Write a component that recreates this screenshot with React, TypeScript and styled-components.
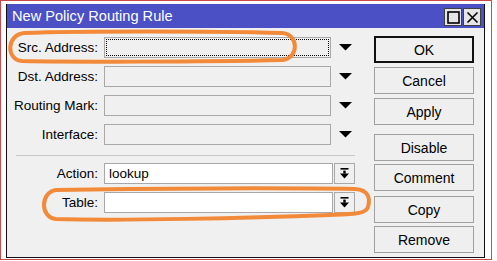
import React from 'react';
import styled, { createGlobalStyle } from 'styled-components';

const Global = createGlobalStyle`
  html, body { margin: 0; padding: 0; background: #ffffff; }
  body { font-family: "Liberation Sans", Arial, sans-serif; }
`;

const Frame = styled.div`
  position: relative;
  box-sizing: border-box;
  width: 492px;
  height: 260px;
  border: 1px solid #c84a4a;
  padding: 3px 6px 1px 5px;
  display: flex;
`;

const Window = styled.div`
  box-sizing: border-box;
  width: 479px;
  display: flex;
  flex-direction: column;
  border: 1px solid #101010;
  border-top: none;
  background: #f0f0f0;
`;

const TitleBar = styled.div`
  height: 24px;
  background: #4b50c5;
  display: flex;
  align-items: center;
  padding: 0 3px 0 5px;
`;

const Title = styled.span`
  color: #ffffff;
  font-size: 14.6px;
  line-height: 24px;
`;

const TitleButtons = styled.div`
  margin-left: auto;
  display: flex;
  gap: 1px;
  padding-top: 2px;
`;

const TitleButton = styled.div`
  box-sizing: border-box;
  width: 18px;
  height: 18px;
  background: #e6e6e6;
  border: 1px solid #404040;
  display: flex;
  align-items: center;
  justify-content: center;
`;

const Body = styled.div`
  flex: 1;
  display: flex;
  padding: 8px 10px 0 0;
`;

const Form = styled.div`
  width: 349px;
  display: flex;
  flex-direction: column;
  padding-top: 1px;
`;

const Row = styled.div<{ $mt?: number }>`
  display: grid;
  grid-template-columns: 97px 227px 25px;
  align-items: center;
  height: 21px;
  margin-top: ${(p) => p.$mt ?? 8}px;
`;

const Label = styled.label`
  text-align: right;
  padding-right: 6px;
  font-size: 13.5px;
  color: #000;
  white-space: nowrap;
`;

const Field = styled.div<{ $active?: boolean; $wide?: boolean }>`
  box-sizing: border-box;
  height: 21px;
  width: ${(p) => (p.$wide ? 229 : 227)}px;
  border: 1px solid #a8a8a8;
  background: ${(p) => (p.$active ? '#ffffff' : '#f0f0f0')};
  font-size: 13.5px;
  line-height: 19px;
  padding: 0 0 0 4px;
  color: #000;
  position: relative;
`;

const FocusRect = styled.div`
  position: absolute;
  inset: 1px;
  border: 1px dotted #000;
`;

const ArrowCell = styled.div<{ $button?: boolean }>`
  display: flex;
  align-items: center;
  justify-content: ${(p) => (p.$button ? 'flex-start' : 'center')};
  padding-left: ${(p) => (p.$button ? 0 : 4)}px;
  height: 21px;
`;

const DropButton = styled.div`
  box-sizing: border-box;
  width: 21px;
  height: 21px;
  margin-left: 3px;
  border: 1px solid #a8a8a8;
  background: #f0f0f0;
  display: flex;
  align-items: center;
  justify-content: center;
`;

const Separator = styled.div`
  margin: 10px 0 0 9px;
  width: 339px;
  height: 1px;
  background: #c8c8c8;
`;

const Buttons = styled.div`
  margin-left: 18px;
  width: 100px;
  display: flex;
  flex-direction: column;
`;

const Button = styled.button<{ $default?: boolean; $mt?: number }>`
  box-sizing: border-box;
  width: 100px;
  height: 27px;
  margin-top: ${(p) => p.$mt ?? 4}px;
  background: #efefef;
  border: ${(p) => (p.$default ? '2px solid #111' : '1px solid #a0a0a0')};
  font-family: "Liberation Sans", Arial, sans-serif;
  font-size: 14px;
  color: #000;
  padding: 0;
`;

const Overlay = styled.svg`
  position: absolute;
  left: -1px;
  top: -1px;
  pointer-events: none;
`;

const Triangle = () => (
  <svg width="13" height="7" viewBox="0 0 13 7">
    <polygon points="0,0 13,0 6.5,6.5" fill="#000" />
  </svg>
);

const BarArrow = () => (
  <svg width="9" height="11" viewBox="0 0 9 11">
    <rect x="0.5" y="0" width="8" height="1.6" fill="#000" />
    <rect x="3.3" y="2.6" width="2.4" height="3" fill="#000" />
    <polygon points="0,5.4 9,5.4 4.5,10.5" fill="#000" />
  </svg>
);

const topFields = ['Src. Address:', 'Dst. Address:', 'Routing Mark:', 'Interface:'];

export default function App() {
  return (
    <>
      <Global />
      <Frame>
        <Window>
          <TitleBar>
            <Title>New Policy Routing Rule</Title>
            <TitleButtons>
              <TitleButton>
                <svg width="13" height="13" viewBox="0 0 13 13">
                  <rect x="1" y="1" width="11" height="11" fill="none" stroke="#000" strokeWidth="1.6" />
                </svg>
              </TitleButton>
              <TitleButton>
                <svg width="13" height="13" viewBox="0 0 13 13">
                  <path d="M1.5 1.5 L11.5 11.5 M11.5 1.5 L1.5 11.5" stroke="#000" strokeWidth="1.6" />
                </svg>
              </TitleButton>
            </TitleButtons>
          </TitleBar>
          <Body>
            <Form>
              {topFields.map((f, i) => (
                <Row key={f} $mt={i === 0 ? 0 : 8}>
                  <Label>{f}</Label>
                  <Field>{i === 0 && <FocusRect />}</Field>
                  <ArrowCell>
                    <Triangle />
                  </ArrowCell>
                </Row>
              ))}
              <Separator />
              <Row $mt={7}>
                <Label>Action:</Label>
                <Field $active $wide>lookup</Field>
                <ArrowCell $button>
                  <DropButton>
                    <BarArrow />
                  </DropButton>
                </ArrowCell>
              </Row>
              <Row $mt={8}>
                <Label>Table:</Label>
                <Field $active $wide />
                <ArrowCell $button>
                  <DropButton>
                    <BarArrow />
                  </DropButton>
                </ArrowCell>
              </Row>
            </Form>
            <Buttons>
              <Button $default $mt={0}>OK</Button>
              <Button>Cancel</Button>
              <Button>Apply</Button>
              <Button $mt={9}>Disable</Button>
              <Button $mt={3}>Comment</Button>
              <Button $mt={5}>Copy</Button>
              <Button $mt={3}>Remove</Button>
            </Buttons>
          </Body>
        </Window>
        <Overlay width="492" height="260" viewBox="0 0 492 260">
          <path
            d="M 24 33 C 80 31, 210 31, 282 33 C 299 34, 299 58, 283 60 C 200 62, 70 62, 22 61 C 6 60, 6 35, 24 33 Z"
            fill="none"
            stroke="#f28a3a"
            strokeWidth="4"
          />
          <path
            d="M 56 190 C 150 188, 300 188, 355 189 C 370 190, 370 200, 368 207 C 366 214, 355 214, 330 215 C 250 218, 120 221, 56 219 C 40 218, 40 192, 56 190 Z"
            fill="none"
            stroke="#f28a3a"
            strokeWidth="4"
          />
        </Overlay>
      </Frame>
    </>
  );
}
